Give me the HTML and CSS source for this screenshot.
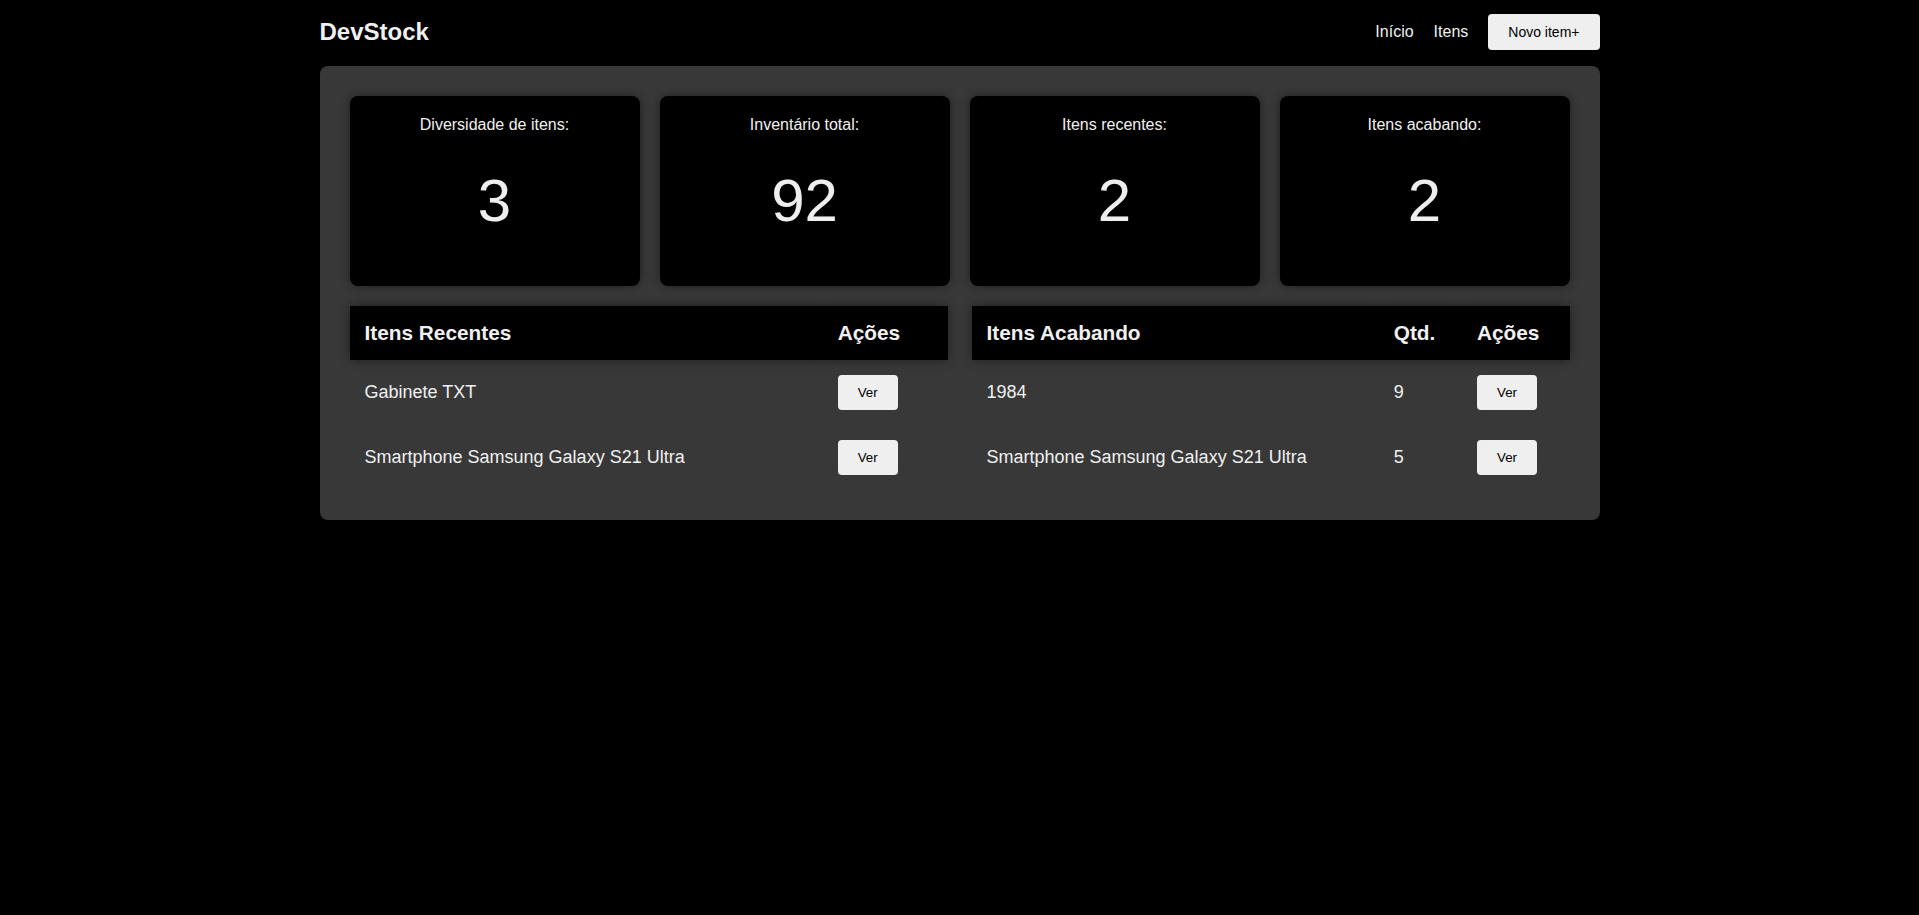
FILE: index.html
```html
<!DOCTYPE html>
<html lang="pt-BR">
<head>
<meta charset="utf-8">
<title>DevStock</title>
<link rel="stylesheet" href="styles.css">
</head>
<body>
<div class="container">
  <header class="topbar">
    <div class="logo">DevStock</div>
    <nav class="nav">
      <a class="nav-link" href="#">Início</a>
      <a class="nav-link" href="#">Itens</a>
      <button class="btn btn-new">Novo item+</button>
    </nav>
  </header>
  <main class="panel">
    <section class="stats">
      <div class="stat-card">
        <div class="stat-label">Diversidade de itens:</div>
        <div class="stat-value">3</div>
      </div>
      <div class="stat-card">
        <div class="stat-label">Inventário total:</div>
        <div class="stat-value">92</div>
      </div>
      <div class="stat-card">
        <div class="stat-label">Itens recentes:</div>
        <div class="stat-value">2</div>
      </div>
      <div class="stat-card">
        <div class="stat-label">Itens acabando:</div>
        <div class="stat-value">2</div>
      </div>
    </section>
    <section class="tables">
      <table class="data-table">
        <thead>
          <tr><th>Itens Recentes</th><th>Ações</th></tr>
        </thead>
        <tbody>
          <tr><td>Gabinete TXT</td><td><button class="btn btn-small">Ver</button></td></tr>
          <tr><td>Smartphone Samsung Galaxy S21 Ultra</td><td><button class="btn btn-small">Ver</button></td></tr>
        </tbody>
      </table>
      <table class="data-table">
        <thead>
          <tr><th>Itens Acabando</th><th>Qtd.</th><th>Ações</th></tr>
        </thead>
        <tbody>
          <tr><td>1984</td><td>9</td><td><button class="btn btn-small">Ver</button></td></tr>
          <tr><td>Smartphone Samsung Galaxy S21 Ultra</td><td>5</td><td><button class="btn btn-small">Ver</button></td></tr>
        </tbody>
      </table>
    </section>
  </main>
</div>
</body>
</html>
```

FILE: styles.css
```css
* {
  box-sizing: border-box;
}

html, body {
  margin: 0;
  padding: 0;
  background: #000;
}

body {
  font-family: "Liberation Sans", Arial, sans-serif;
  color: #f0f0f0;
  min-height: 915px;
}

.container {
  width: 1280px;
  margin: 0 auto;
}

.topbar {
  display: flex;
  align-items: center;
  justify-content: space-between;
  padding: 14px 0 16px;
}

.logo {
  font-size: 24px;
  font-weight: bold;
  color: #f0f0f0;
}

.nav {
  display: flex;
  align-items: center;
  gap: 20px;
}

.nav-link {
  color: #f0f0f0;
  text-decoration: none;
  font-size: 16px;
}

.btn {
  font-family: "Liberation Sans", Arial, sans-serif;
  background: #efefef;
  color: #000;
  border: none;
  border-radius: 4px;
  cursor: pointer;
}

.btn-new {
  font-size: 14px;
  line-height: 16px;
  padding: 10px 20px;
}

.btn-small {
  font-size: 13.33px;
  line-height: 15px;
  padding: 10px 20px;
  display: block;
}

.panel {
  background: #383838;
  border-radius: 8px;
  padding: 30px;
}

.stats {
  display: grid;
  grid-template-columns: repeat(4, 1fr);
  gap: 20px;
}

.stat-card {
  background: #000;
  border-radius: 8px;
  height: 190px;
  padding: 20px;
  display: flex;
  flex-direction: column;
  text-align: center;
  box-shadow: 0 0 10px rgba(0, 0, 0, 0.45);
}

.stat-label {
  font-size: 16px;
  line-height: 18px;
}

.stat-value {
  flex: 1;
  display: flex;
  align-items: center;
  justify-content: center;
  font-size: 60px;
  color: #eeeeee;
}

.tables {
  display: grid;
  grid-template-columns: 1fr 1fr;
  gap: 24px;
  margin-top: 20px;
  align-items: start;
}

.data-table {
  width: 100%;
  border-collapse: collapse;
}

.data-table th {
  background: #000;
  text-align: left;
  font-size: 20.8px;
  font-weight: bold;
  line-height: 24px;
  padding: 15px;
  box-shadow: 0 0 10px rgba(0, 0, 0, 0.45);
}

.data-table td {
  font-size: 18px;
  line-height: 21px;
  padding: 15px;
  height: 65px;
  vertical-align: middle;
}
```
